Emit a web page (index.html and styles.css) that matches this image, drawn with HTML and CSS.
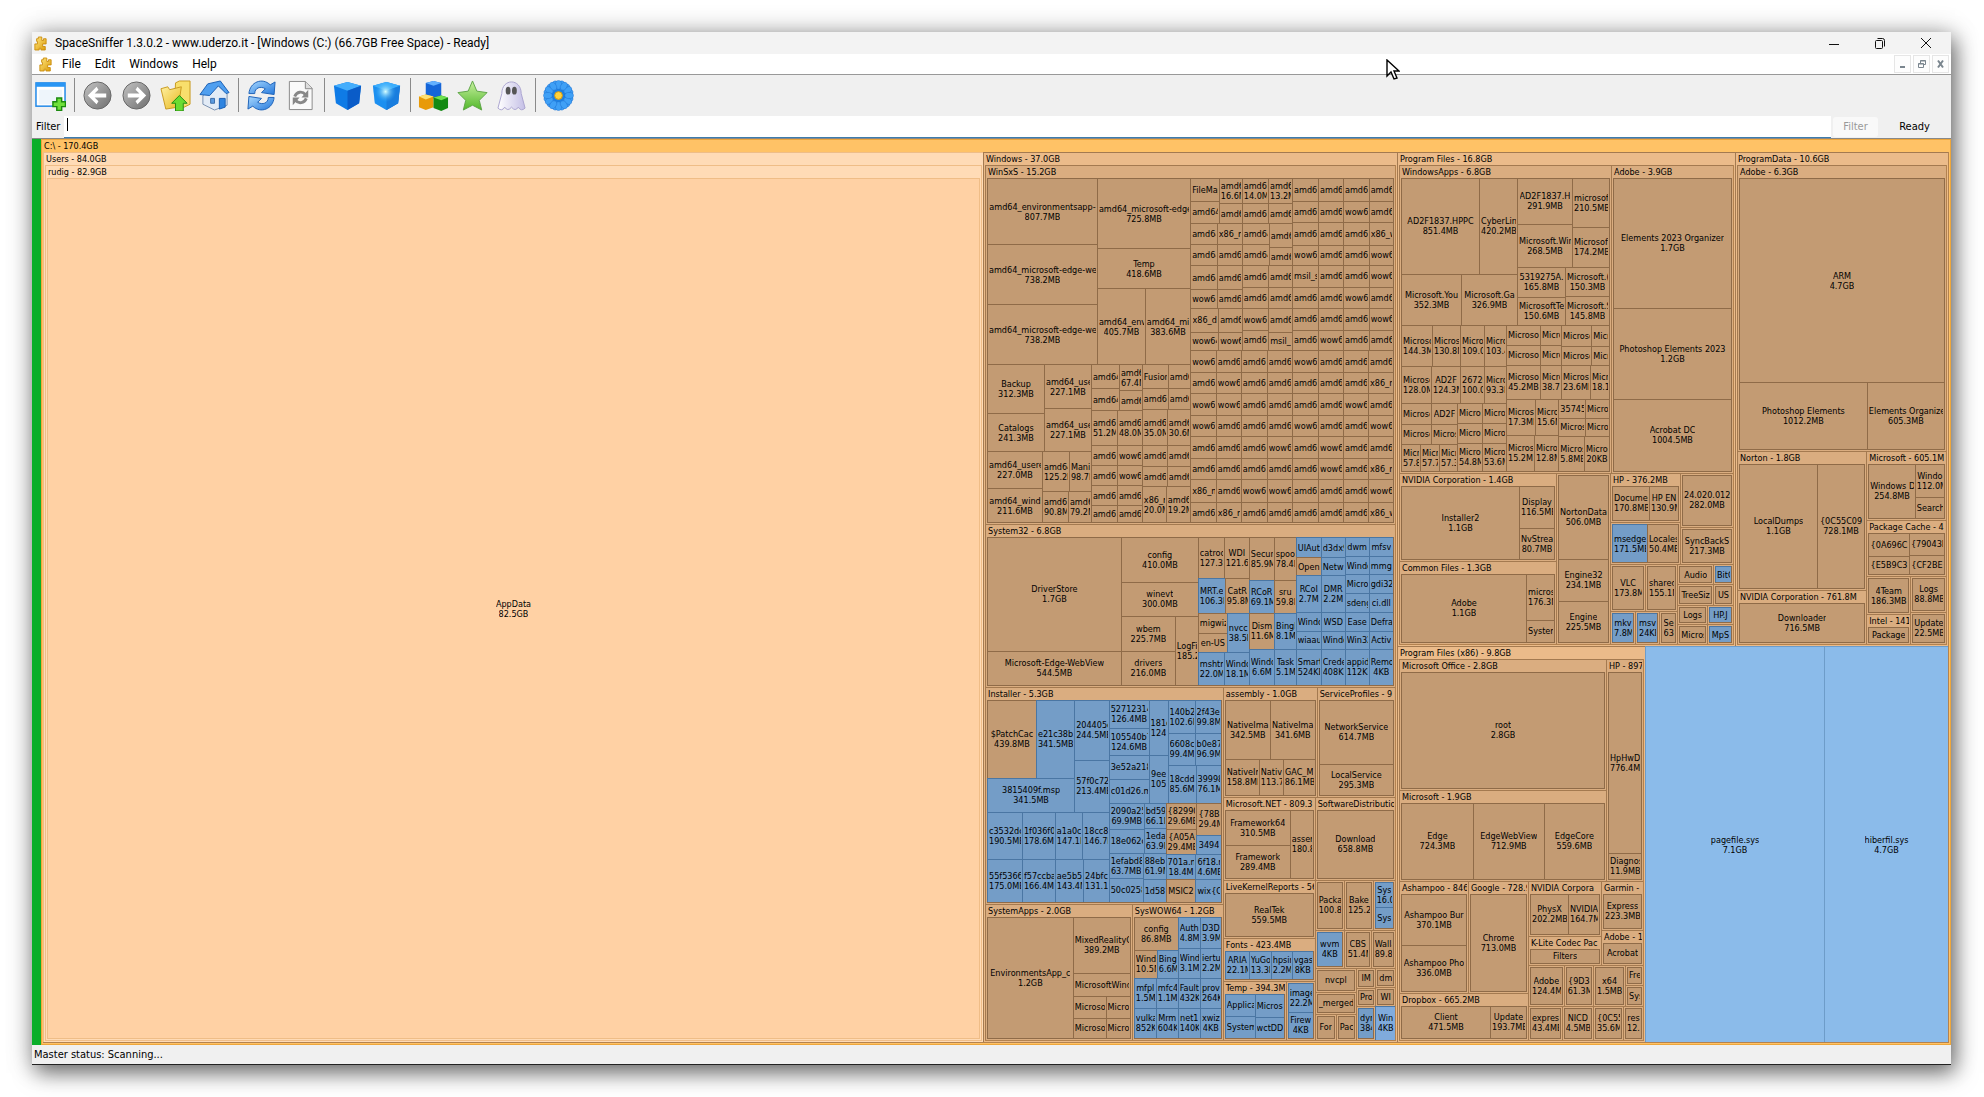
FILE: index.html
```html
<!DOCTYPE html>
<html lang="en">
<head>
<meta charset="utf-8">
<title>SpaceSniffer</title>
<link rel="stylesheet" href="styles.css">
</head>
<body>
<svg class="defs" aria-hidden="true">
  <defs>
    <linearGradient id="gYellow" x1="0" y1="0" x2="1" y2="1"><stop offset="0" stop-color="#fff0a0"/><stop offset="1" stop-color="#e8b820"/></linearGradient>
    <linearGradient id="gPuzzle" x1="0" y1="0" x2="1" y2="1"><stop offset="0" stop-color="#ffe680"/><stop offset="1" stop-color="#dc9c08"/></linearGradient>
    <linearGradient id="gGrey" x1="0" y1="0" x2="1" y2="1"><stop offset="0" stop-color="#c4c4c4"/><stop offset="1" stop-color="#6e6e6e"/></linearGradient>
    <linearGradient id="gGreen" x1="0" y1="0" x2="0" y2="1"><stop offset="0" stop-color="#c8f0a0"/><stop offset="1" stop-color="#52b82a"/></linearGradient>
    <linearGradient id="gBlue" x1="0" y1="0" x2="1" y2="1"><stop offset="0" stop-color="#a8d8ff"/><stop offset="1" stop-color="#2478dc"/></linearGradient>
    <linearGradient id="gGhost" x1="0" y1="0" x2="1" y2="0"><stop offset="0" stop-color="#fff"/><stop offset="1" stop-color="#c4bfe6"/></linearGradient>
    <radialGradient id="gGlow"><stop offset="0" stop-color="#d8ffff"/><stop offset="1" stop-color="#2aa4f4" stop-opacity="0"/></radialGradient>
    <g id="puzzle"><path d="M5 1h4v4h2V3h3v6h-4v3h3v4H8v-2H6v2H1V9h3V6H3V3h2z" fill="url(#gPuzzle)" stroke="#c88a08"/></g>
    <g id="cube"><path d="M2 6 16 2l14 4-2 18-12 7L4 24z" fill="#0f7be6"/><path d="M2 6 16 2l14 4-14 5z" fill="#45aefc"/><path d="M16 11 30 6l-2 18-12 7z" fill="#0a5cc8"/></g>
    <g id="swirl"><path d="M3 14C4 2 17-3 25 5l5-3-1 13-13-2 4-4C15 6 9 8 9 14z" fill="url(#gBlue)" stroke="#1e62b8"/><path d="M29 18c-1 12-14 17-22 9l-5 3 1-13 13 2-4 4c5 3 11 1 11-5z" fill="url(#gBlue)" stroke="#1e62b8"/></g>
    <g id="petals"><ellipse id="petal" cx="16" cy="5" rx="3.200" ry="4.500" fill="#3fa0f6" stroke="#1668cc" stroke-width=".4"/><use href="#petal" transform="rotate(60 16 16)"/><use href="#petal" transform="rotate(120 16 16)"/><use href="#petal" transform="rotate(180 16 16)"/><use href="#petal" transform="rotate(240 16 16)"/><use href="#petal" transform="rotate(300 16 16)"/></g>
  </defs>
</svg>
<main class="window">
  <header class="titlebar">
    <svg class="app-icon" viewBox="0 0 15 17"><use href="#puzzle"/></svg>
    <h1>SpaceSniffer 1.3.0.2 - www.uderzo.it - [Windows (C:) (66.7GB Free Space) - Ready]</h1>
    <button class="win-btn" aria-label="Minimize"><svg viewBox="0 0 12 12"><path d="M1 7.500h10"/></svg></button>
    <button class="win-btn" aria-label="Restore"><svg viewBox="0 0 12 12"><rect x="1.500" y="3.500" width="7" height="8" rx="1"/><path d="M3.500 1.500h5q2 0 2 2v6"/></svg></button>
    <button class="win-btn" aria-label="Close"><svg viewBox="0 0 12 12"><path d="M1 1l10 10M11 1 1 11"/></svg></button>
  </header>
  <nav class="menubar">
    <svg class="app-icon" viewBox="0 0 15 17"><use href="#puzzle"/></svg>
    <button>File</button><button>Edit</button><button>Windows</button><button>Help</button>
    <span class="mdi">
      <button aria-label="Minimize view"><svg viewBox="0 0 10 10"><path d="M2 8h5" stroke-width="2"/></svg></button>
      <button aria-label="Restore view"><svg viewBox="0 0 10 10"><path d="M1.500 4.500h5v4h-5zM3.500 4V1.500h5v4H7M1.500 5h5M3.500 2h5"/></svg></button>
      <button aria-label="Close view"><svg viewBox="0 0 10 10"><path d="M2 1.500l5 7M7 1.500l-5 7" stroke-width="2"/></svg></button>
    </span>
  </nav>
  <div class="toolbar" role="toolbar">
    <button aria-label="New view"><svg viewBox="0 0 32 32"><rect x="1" y="3" width="30" height="24" fill="#fff" stroke="#1c86e8" stroke-width="1.500"/><path d="M1 3h30v4H1z" fill="#2a96f4"/><path d="M4 10h24v15H4z" fill="#eef5fb"/><path d="M22.500 18.500h5v4h4v5h-4v4h-5v-4h-4v-5h4z" fill="#6fe03a" stroke="#1c8a10" stroke-width="1.500"/></svg></button>
    <i class="sep"></i>
    <button aria-label="Back"><svg viewBox="0 0 32 32"><circle cx="16" cy="16" r="14" fill="url(#gGrey)" stroke="#666"/><path d="M6 16l9-9 2 3-4 4h12v4H13l4 4-2 3z" fill="#fff"/></svg></button>
    <button aria-label="Forward"><svg viewBox="0 0 32 32"><circle cx="16" cy="16" r="14" fill="url(#gGrey)" stroke="#666"/><path d="M26 16l-9-9-2 3 4 4H7v4h12l-4 4 2 3z" fill="#fff"/></svg></button>
    <button aria-label="Up"><svg viewBox="0 0 32 32"><path d="M16 3l4-2 11 0v24l-6 3H15z" fill="#f8df6c" stroke="#c89a20"/><path d="M1 9l7-2 2 3 12-3-3 21-13 2z" fill="url(#gYellow)" stroke="#c89a20"/><path d="M20 16l8 8h-4v8h-8v-8h-4z" fill="#6bdc30" stroke="#218a12"/></svg></button>
    <button aria-label="Home"><svg viewBox="0 0 32 32"><path d="M4 16v9l12 6 13-5V14L20 6z" fill="#e2ebf6" stroke="#7890b0"/><path d="M1 15 9 4l13-3 9 12-3 1-8-8-9 10z" fill="#4f9ff0" stroke="#1a5fb4"/><path d="M21 19h6v9l-6 2z" fill="#2f84e0" stroke="#1a5fb4"/><path d="M12 19h4v5h-4z" fill="#5c9be0" stroke="#3c6ca8"/></svg></button>
    <i class="sep"></i>
    <button aria-label="Refresh"><svg viewBox="0 0 32 32"><use href="#swirl"/></svg></button>
    <button aria-label="Rescan file"><svg viewBox="0 0 32 32"><path d="M4.500 1.500H21l7 7v22H4.500z" fill="#fafafa" stroke="#888"/><path d="M21 1.500V9h7" fill="#ddd" stroke="#888"/><g fill="none" stroke="#888" stroke-width="3"><path d="M10 17c2-5 8-6 11-2M22 19c-2 5-8 6-11 2"/></g><path d="M24 10v8h-7zM8 26v-8h7z" fill="#888"/></svg></button>
    <i class="sep"></i>
    <button aria-label="Less detail"><svg viewBox="0 0 32 32"><use href="#cube"/></svg></button>
    <button aria-label="More detail"><svg viewBox="0 0 32 32"><use href="#cube"/><path d="M2 6 16 2l14 4-2 18-12 7L4 24z" fill="#2fb0ff" opacity=".4"/><circle cx="15" cy="12" r="11" fill="url(#gGlow)"/></svg></button>
    <i class="sep"></i>
    <button aria-label="Show files"><svg viewBox="0 0 32 32"><path d="M8 3l8-2 8 2v13l-8 3-8-3z" fill="#1565d8"/><path d="M8 3l8-2 8 2-8 3z" fill="#63b0ff"/><path d="M1 17l7-2 8 2v11l-8 3-7-3z" fill="#e89a08"/><path d="M1 17l7-2 8 2-8 3z" fill="#ffe070"/><path d="M16 18l8-2 7 2v11l-7 3-8-3z" fill="#138a13"/><path d="M16 18l8-2 7 2-7 3z" fill="#6fe050"/></svg></button>
    <button aria-label="Tag"><svg viewBox="0 0 32 32"><path d="M16 1l4.500 10.500L31 13l-8 8 2.500 10L16 26l-9.500 5L9 21l-8-8 10.500-1.500z" fill="url(#gGreen)" stroke="#5fa548"/></svg></button>
    <button aria-label="Free space"><svg viewBox="0 0 32 32"><path d="M6 14C6-2 26-2 26 14l4 15q-4 4-7-1-3 5-7 0-4 5-7 0-3 5-7 1z" fill="url(#gGhost)" stroke="#aaa4cf"/><ellipse cx="12.500" cy="11" rx="2.500" ry="4" fill="#555"/><ellipse cx="19" cy="11" rx="2.500" ry="4" fill="#555"/></svg></button>
    <i class="sep"></i>
    <button aria-label="Configure"><svg viewBox="0 0 32 32"><circle cx="16" cy="16" r="10" fill="#1d80e2"/><use href="#petals" transform="rotate(15 16 16)"/><use href="#petals" transform="rotate(45 16 16)"/><use href="#petals"/><use href="#petals" transform="rotate(30 16 16)"/><circle cx="16" cy="16" r="4" fill="#ffd23c" stroke="#d89a10"/></svg></button>
  </div>
  <form class="filterbar">
    <label for="filter">Filter</label>
    <span class="field"><input id="filter" type="text"><i class="caret"></i></span>
    <button type="button" disabled>Filter</button>
    <output>Ready</output>
  </form>
  <section class="view">
    <div class="freebar"></div>
    <div id="map"></div>
  </section>
  <footer class="status">Master status: Scanning...</footer>
</main>
<svg class="pointer" viewBox="0 0 14 22"><path d="M1 1v16l4-4 3 7 3-1-3-7h5z" fill="#fff" stroke="#000" stroke-width="1.400"/></svg>
<script src="map.js"></script>
</body>
</html>
```
FILE: styles.css
```css
* { box-sizing: border-box; }
body {
  margin: 0;
  height: 100vh;
  padding: 32px 33px 32px 32px;
  background: #fff;
  color: #000;
  font: 11px/13px "DejaVu Sans Condensed", "Noto Sans", sans-serif;
  position: relative;
}
button, input { font: inherit; color: inherit; border: 0; padding: 0; background: none; }
.defs { position: absolute; width: 0; height: 0; }
.window {
  height: 100%;
  display: flex;
  flex-direction: column;
  background: #f0f0f0;
  border-bottom: 1px solid #222;
  box-shadow: 0 0 24px rgba(0,0,0,.25), 4px 8px 20px rgba(0,0,0,.5);
}
.titlebar {
  height: 22px;
  display: flex;
  align-items: center;
  background: #f3f3f3;
  padding: 0 2px;
  font-family: Roboto, "Open Sans", sans-serif;
}
.titlebar h1 { flex: 1; margin: 0 0 0 8px; font-size: 12px; font-weight: 400; }
.app-icon { width: 13px; height: 15px; }
.win-btn { width: 46px; height: 22px; display: flex; align-items: center; justify-content: center; }
.win-btn svg { width: 12px; height: 12px; fill: none; stroke: #111; }
.menubar {
  height: 21px;
  display: flex;
  align-items: center;
  padding-left: 7px;
  background: #fff;
  border-bottom: 1px solid #999;
  font: 12px/16px Roboto, "Open Sans", sans-serif;
}
.menubar > button { padding: 0 7px; }
.menubar > .app-icon { margin-right: 3px; }
.mdi { margin-left: auto; display: flex; gap: 2px; padding-right: 2px; }
.mdi button { width: 17px; height: 18px; border: 1px solid #e6e6e6; background: #fdfdfd; display: flex; align-items: center; justify-content: center; }
.mdi svg { width: 10px; height: 10px; fill: none; stroke: #7a858e; }
.toolbar { height: 40px; display: flex; align-items: center; }
.toolbar button { width: 39px; height: 38px; display: flex; align-items: center; }
.toolbar button { padding-left: 3px; }
.toolbar svg { width: 31px; height: 31px; }
.sep { width: 8px; height: 34px; background: linear-gradient(#8a8a8a, #8a8a8a) 3px 0 / 1px 100% no-repeat; }
.filterbar { height: 23px; display: flex; align-items: center; padding-left: 4px; }
.field { flex: 1; display: flex; height: 22px; margin-left: 4px; position: relative; }
.field input { flex: 1; min-width: 0; background: #fff; border-bottom: 1px solid #3d7dad; outline: 0; }
.caret { position: absolute; left: 3px; top: 2px; width: 1px; height: 13px; background: #000; }
.filterbar button { width: 45px; height: 20px; margin-left: 2px; background: #f9f9f9; border-radius: 3px; color: #999; }
.filterbar output { width: 73px; text-align: center; }
.view { flex: 1; min-height: 0; display: flex; border-top: 1px solid #888; }
.freebar { width: 9px; background: #0aae2a; }
#map { flex: 1; min-width: 0; display: grid; font: 9px/10px "DejaVu Sans Condensed", "Noto Sans", sans-serif; border: solid #eea63a; border-width: 0 1px 1px 0; }
.status { height: 19px; padding: 3px 2px; }

.split { display: grid; min-width: 0; min-height: 0; }
.folder {
  display: flex;
  flex-direction: column;
  min-width: 0;
  min-height: 0;
  padding: 1px;
  border: solid #a47a50;
  border-width: 1px 0 0 1px;
  background: #daad80;
}
.folder > .title { height: 12px; margin-top: -1px; padding: 1px 0 0 1px; line-height: 11px; overflow: hidden; white-space: nowrap; }
.folder > .body { flex: 1; min-height: 0; display: grid; border: solid #8f6b48; border-width: 0 1px 1px 0; }
.folder.root { background: #ffc266; border-color: #eea63a; }
.folder.top { background: #ebbb8a; border-color: #a47a50; }
.folder.top > .body, .folder.root > .body { border-color: #b3824f; }
.leaf {
  min-width: 0;
  min-height: 0;
  overflow: hidden;
  display: flex;
  flex-direction: column;
  align-items: center;
  justify-content: center;
  padding: 0 1px;
  border: solid #8f6b48;
  border-width: 1px 0 0 1px;
  background: #c39b73;
}
.leaf span { max-width: 100%; overflow-x: clip; white-space: nowrap; flex: none; }
.leaf.file { background: #749dc7; border-color: #4a76a3; }
.leaf.file.mid { background: #80abdc; }
.leaf.file.big { background: #8bbbea; border-color: #6d9cc9; }
.pale .folder.top, .folder.pale { background: #ffdbb6; border-color: #efbd87; }
.folder.pale > .body { border-color: #efbd87; }
.folder.pale .leaf { background: #ffd1a4; border-color: #efbd87; }
.pointer { position: absolute; left: 1386px; top: 59px; width: 14px; height: 22px; }
```
FILE: map.js
```js
// Treemap model. R = row of [width, node] pairs, C = column of [height, node] pairs,
// T = table of leaves, F = folder. Leaves are "name|size"; a leading * marks a file.
const R = (...a) => ({ dir: 'Columns', a });
const C = (...a) => ({ dir: 'Rows', a });
const F = (title, kid, cls) => ({ title, kid, cls: cls || '' });
const NAMES = { a: 'amd64', w: 'wow64', x: 'x86_m', M: 'Microsoft' };
const T = (cols, rows, text) => {
  const cells = text.split(',');
  return C(...rows.flatMap((h, r) => [h, R(...cols.flatMap((w, c) => [w, cells[r * cols.length + c]]))]));
};

const winsxs = F('WinSxS - 15.2GB', R(
  610, C(
    558, R(
      330, C(198, 'amd64_environmentsapp-|807.7MB', 180, 'amd64_microsoft-edge-we|738.2MB', 180, 'amd64_microsoft-edge-we|738.2MB'),
      280, C(210, 'amd64_microsoft-edge|725.8MB', 120, 'Temp|418.6MB', 228, R(144, 'amd64_env|405.7MB', 136, 'amd64_mi|383.6MB'))),
    474, R(
      312, C(
        261, R(171, C(147, 'Backup|312.3MB', 114, 'Catalogs|241.3MB'), 141, C(132, 'amd64_use|227.1MB', 129, 'amd64_use|227.1MB')),
        213, R(165, C(111, 'amd64_usere|227.0MB', 102, 'amd64_wind|211.6MB'),
               147, C(120, T([81, 66], [1], 'a|125.2M,Mani|98.7M'), 93, T([78, 69], [1], 'a|90.8M,a|79.2M')))),
      153, C(138, R(84, C(72, 'a', 66, 'a'), 69, C(78, 'a|67.4M', 60, 'a')),
             336, T([78, 75], [105, 60, 60, 58, 53], 'a|51.2M,a|48.0M,a,w,a,w,a,a,a,a')),
      145, C(135, T([78, 67], [72, 63], 'Fusion,a,a,a'),
             231, T([75, 70], [107, 64, 60], 'a|35.0M,a|30.6M,a,a,a,a'),
             108, T([72, 73], [1], 'x86_m|20.0M,a|19.2M')))),
  609, C(
    515, R(
      306, C(
        135, R(86, C(68, 'FileMaps', 67, 'a'), 69, C(75, 'a|16.6M', 60, 'a'), 79, C(75, 'a|14.0M', 60, 'a'), 72, C(75, 'a|13.2M', 60, 'a')),
        127, R(80, C(64, 'a', 63, 'a'), 75, C(64, 'x86_m', 63, 'a'), 81, C(64, 'a', 63, 'a'), 70, C(72, 'a', 55, 'a')),
        128, R(80, C(70, 'a', 58, 'w'), 75, C(70, 'a', 58, 'a'), 79, C(64, 'a', 64, 'a'), 72, C(64, 'a', 64, 'a')),
        125, R(84, C(70, 'x86_d', 55, 'w'), 71, C(70, 'a', 55, 'w'), 79, C(65, 'w', 60, 'a'), 72, C(70, 'a', 55, 'msil_'))),
      303, T([78, 75, 77, 73], [70, 61, 69, 60, 66, 63, 66, 60], 'a,a,a,a,a,a,w,a,a,a,a,x86_w,w,a,a,w,msil_s,a,a,w,a,a,w,a,a,a,a,w,a,w,a,a')),
    517, T([77, 75, 78, 76, 78, 75, 75, 75], [67, 63, 66, 63, 66, 63, 67, 62],
      'w,a,a,a,w,a,a,a,a,w,a,a,a,a,a,x,w,w,a,a,a,a,w,a,w,a,a,a,w,a,a,w,a,a,a,w,a,w,a,a,a,a,a,a,a,w,a,x,x,a,w,w,a,a,a,w,a,x,a,a,a,a,a,x86_w'))));

const system32 = F('System32 - 6.8GB', R(
  402, C(339, 'DriverStore|1.7GB', 102, 'Microsoft-Edge-WebView|544.5MB'),
  231, C(135, 'config|410.0MB', 99, 'winevt|300.0MB', 207, R(162, C(105, 'wbem|225.7MB', 102, 'drivers|216.0MB'), 69, 'LogFiles|185.2M')),
  153, C(123, T([78, 75], [1], 'catroot|127.3M,WDI|121.6M'), 102, T([81, 72], [1], '*MRT.e|106.3M,CatR|95.8M'),
         117, R(87, C(60, 'migwiz', 57, 'en-US'), 66, '*nvcc|38.5M'), 99, T([78, 75], [1], '*mshtm|22.0M,*Windo|18.1M')),
  141, C(129, T([75, 66], [1], 'Secur|85.9M,spoo|78.4M'), 96, T([75, 66], [1], '*RCoR|69.1M,sru|59.8M'),
         108, T([76, 65], [1], 'Dism|11.6M,*BingM|8.1M'), 108, T([76, 65], [1], '*Windo|6.6M,*Task|5.1M')),
  147, T([75, 72], [60, 54, 108, 57, 54, 108], '*UIAut,*d3dx9,Open,*Netw,*RCoI|2.7M,*DMR|2.2M,*Windo,*WSD,*wiaau,*Windo,*Smart|524KB,*Crede|408KB'),
  145, T([72, 73], [57, 54, 57, 54, 57, 54, 108], '*dwm,*mfsv,*Windo,*mmg,*Micro,*gdi32,*sdeng,*ci.dll,*Ease,*Defra,*Win32,*Activ,*appid|112KB,*Remo|4KB')));

const installer = F('Installer - 5.3GB', R(
  366, C(
    336, R(262, C(234, R(147, '$PatchCac|439.8MB', 115, '*e21c38b|341.5MB'), 102, '*3815409f.msp|341.5MB'),
           104, C(180, '*204405c|244.5MB', 156, '*57f0c72|213.4MB')),
    141, T([105, 99, 82, 80], [1], '*c3532dc|190.5MB,*1f036f0|178.6MB,*a1a0c|147.1M,*18cc87|146.7M'),
    130, T([105, 99, 85, 77], [1], '*55f5366|175.0MB,*f57ccba|166.4MB,*ae5b5|143.4M,*24bfc|131.1M')),
  337, C(
    309, R(120, C(84, '*52712314|126.4MB', 81, '*105540b7|124.6MB', 72, '*3e52a218', 72, '*c01d26.m'),
           57, C(165, '*181c|124', 144, '*9ee|105'),
           160, C(99, T([81, 79], [1], '*140b2|102.6M,*2f43e|99.8M'), 96, T([81, 79], [1], '*6608c|99.4M,*b0e87|96.9M'), 114, T([84, 76], [1], '*18cdd|85.6M,*39998|76.1M'))),
    298, R(171, C(150, R(105, C(78, '*2090a25|69.9MB', 72, '*18e062c'), 66, C(75, '*bd59|66.1M', 75, '*1eda|63.9M')),
                  148, R(102, C(75, '*1efabd8|63.7MB', 73, '*50c0258'), 69, C(79, '*88eb|61.9M', 69, '*1d58'))),
           166, C(153, R(93, C(78, '{82990|29.6MB', 75, '{A05A|29.4MB'), 73, C(96, '{78B|29.4M', 57, '*3494')),
                  145, T([90, 76], [75, 70], '*701a.m|18.4M,*6f18.m|4.6MB,MSIC2,*wix{C'))))));

const winLow = R(
  714, C(
    652, installer,
    408, R(
      441, F('SystemApps - 2.0GB', R(258, 'EnvironmentsApp_c|1.2GB', 172, C(168, 'MixedRealityC|389.2MB', 69, 'MicrosoftWind', 127, T([99, 73], [66, 61], 'M,M,M,M')))),
      273, F('SysWOW64 - 1.2GB', R(
        132, C(99, 'config|86.8MB', 84, T([69, 63], [1], 'Windo|10.5M,*Bing|6.6M'), 181, T([66, 66], [90, 91], '*mfpl|1.5MB,*mfc4|1.1MB,*vulka|852KB,*Mrm|604KB')),
        130, T([67, 63], [93, 90, 90, 91], '*Auth|4.8MB,*D3D|3.9M,*Wind|3.1MB,*iertu|2.2M,*Fault|432KB,*prov|264K,*net1|140KB,*xwiz|4KB'))))),
  517, C(
    330, R(282, F('assembly - 1.0GB', C(177, T([135, 135], [1], 'NativeIma|342.5MB,NativeIma|341.6MB'), 108, T([102, 72, 96], [1], 'NativeIm|158.8MB,Nativ|113.7M,GAC_M|86.1MB'))),
           235, F('ServiceProfiles - 9', C(192, 'NetworkService|614.7MB', 93, 'LocalService|295.3MB'))),
    249, R(276, F('Microsoft.NET - 809.3', R(195, C(105, 'Framework64|310.5MB', 99, 'Framework|289.4MB'), 69, 'assem|180.8M')),
           241, F('SoftwareDistributio', 'Download|658.8MB')),
    481, R(
      276, C(174, F('LiveKernelReports - 56', 'RealTek|559.5MB'),
             129, F('Fonts - 423.4MB', T([72, 66, 63, 63], [1], '*ARIA|22.1M,*YuGo|13.3M,*hpsim|2.2MB,*vgas|8KB')),
             178, R(189, F('Temp - 394.3M', R(90, C(66, '*Applica', 67, '*System'), 88, C(69, '*Micros', 64, '*wctDD'))), 87, F('', C(87, '*image|22.2M', 79, '*Firew|4KB')))),
      241, C(
        150, R(88, F('', 'Packa|100.8M'), 86, F('', 'Bake|125.2M'), 67, F('', C(77, '*Sys|16.0M', 62, '*Sys'))),
        114, R(87, F('', '*wvm|4KB'), 81, F('', 'CBS|51.4M'), 73, F('', 'Walla|89.8M')),
        217, R(124, C(72, F('', 'nvcpl'), 66, F('', '_merged'), 79, R(63, F('', 'For'), 61, F('', 'Pac'))),
               58, C(60, F('', 'IM'), 54, F('', 'Pro'), 103, F('', '*dyn|384')),
               59, C(58, F('', 'dm'), 56, F('', 'WI'), 103, '#Win|4KB'))))));

const windows = F('Windows - 37.0GB', C(1078, winsxs, 486, system32, 1060, winLow), 'top');

const windowsApps = F('WindowsApps - 6.8GB', C(
  441, R(
    348, C(288, T([234, 114], [1], 'AD2F1837.HPPC|851.4MB,CyberLin|420.2MB'), 153, T([180, 168], [1], 'Microsoft.You|352.3MB,Microsoft.Ga|326.9MB')),
    276, C(267, R(165, C(138, 'AD2F1837.H|291.9MB', 129, 'Microsoft.Win|268.5MB'), 111, C(147, 'microsoft|210.5MB', 120, 'Microsoft|174.2MB')),
           174, R(144, C(90, '5319275A.|165.8MB', 84, 'MicrosoftTe|150.6MB'), 132, C(87, 'Microsoft.(|150.3MB', 87, 'Microsoft.S|145.8MB')))),
  439, R(
    315, C(
      123, T([93, 84, 72, 66], [1], 'M|144.3MB,M|130.8M,M|109.0M,M|103.4M'),
      111, T([90, 87, 72, 66], [1], 'M|128.0MB,AD2F|124.3M,26720|100.0M,M|93.3M'),
      205, R(168, C(63, T([90, 78], [1], 'M,AD2F'), 60, T([90, 78], [1], 'M,M'), 82, T([57, 57, 54], [1], 'M|57.8M,M|57.7M,M|57.3M')),
             147, T([75, 72], [60, 60, 85], 'M,M,M,M,M|54.8M,M|53.6M'))),
    309, C(
      222, R(165, T([102, 63], [60, 60, 102], 'M,M,M,M,M|45.2MB,M|38.7M'),
             144, C(120, T([91, 53], [64, 56], 'M,M,M,M'), 102, T([87, 57], [1], 'M|23.6MB,M|18.1M'))),
      217, R(157, C(108, T([87, 70], [1], 'M|17.3MB,M|15.6M'), 109, T([84, 73], [1], 'M|15.2MB,M|12.8M')),
             152, C(111, T([80, 72], [57, 54], '35745,M,M,M'), 106, T([77, 75], [1], 'M|5.8MB,M|20KB')))))));

const pfLow = R(
  471, C(264, F('NVIDIA Corporation - 1.4GB', R(354, 'Installer2|1.1GB', 105, C(126, 'Display|116.5MB', 93, 'NvStrea|80.7MB'))),
         250, F('Common Files - 1.3GB', R(375, 'Adobe|1.1GB', 84, C(139, 'micros|176.3M', 67, 'System')))),
  162, F('', C(252, 'NortonData|506.0MB', 126, 'Engine32|234.1MB', 124, 'Engine|225.5MB')),
  369, C(
    275, R(210, C(147, F('HP - 376.2MB', T([111, 87], [1], 'Documen|170.8MB,HP EN|130.9M')), 128, F('', T([105, 93], [1], '*msedge|171.5MB,Locales|50.4MB'))),
           159, C(162, F('', '24.020.012|282.0MB'), 113, F('', 'SyncBackS|217.3MB'))),
    239, R(202, C(139, R(105, F('', 'VLC|173.8M'), 97, F('', 'shared|155.1M')), 100, R(75, F('', '*mkv|7.8M'), 72, F('', '*msv|24KB'), 55, F('', 'Se|63'))),
           167, C(60, R(107, F('', 'Audio'), 60, F('', '*BitC')), 61, R(107, F('', 'TreeSiz'), 60, F('', 'US')),
                  59, R(89, F('', 'Logs'), 78, F('', '*HP.J')), 59, R(89, F('', 'Micros'), 78, F('', '*MpS'))))));

const programFiles = F('Program Files - 16.8GB', C(
  925, R(636, windowsApps, 366, F('Adobe - 3.9GB', C(390, 'Elements 2023 Organizer|1.7GB', 273, 'Photoshop Elements 2023|1.2GB', 217, 'Acrobat DC|1004.5MB'))),
  514, pfLow), 'top');

const programData = F('ProgramData - 10.6GB', C(
  859, F('Adobe - 6.3GB', C(615, 'ARM|4.7GB', 200, T([384, 232], [1], 'Photoshop Elements|1012.2MB,Elements Organize|605.3MB'))),
  580, R(387, C(417, F('Norton - 1.8GB', T([234, 142], [1], 'LocalDumps|1.1GB,{0C55C09|728.1MB')), 163, F('NVIDIA Corporation - 761.8M', 'Downloader|716.5MB')),
         239, C(207, F('Microsoft - 605.1M', R(141, 'Windows D|254.8MB', 88, C(99, 'Windo|112.0M', 63, 'Search'))),
                168, F('Package Cache - 4', R(123, C(69, '{0A696C', 54, '{E5B9C3'), 106, C(66, '{79043E', 57, '{CF2BE'))),
                205, R(132, C(116, F('', '4Team|186.3MB'), 89, F('Intel - 141', 'Package')), 107, C(108, F('', 'Logs|88.8MB'), 97, F('', 'Update|22.5MB')))))), 'top');

const programFiles86 = F('Program Files (x86) - 9.8GB', C(
  664, R(621, C(392, F('Microsoft Office - 2.8GB', 'root|2.8GB'), 272, F('Microsoft - 1.9GB', T([216, 213, 181], [1], 'Edge|724.3MB,EdgeWebView|712.9MB,EdgeCore|559.6MB'))),
         111, F('HP - 897', C(543, 'HpHwD|776.4MB', 76, 'Diagnos|11.9MB'))),
  478, R(
    387, C(336, R(207, F('Ashampoo - 846', C(153, 'Ashampoo Bur|370.1MB', 138, 'Ashampoo Pho|336.0MB')), 180, F('Google - 728.9', 'Chrome|713.0MB')),
           142, F('Dropbox - 665.2MB', T([267, 108], [1], 'Client|471.5MB,Update|193.7MB'))),
    345, C(
      252, R(219, C(165, F('NVIDIA Corpora', T([114, 93], [1], 'PhysX|202.2MB,NVIDIA|164.7M')), 87, F('K-Lite Codec Pac', 'Filters')),
             126, C(147, F('Garmin -', 'Express|223.3MB'), 105, F('Adobe - 1', 'Acrobat'))),
      124, R(107, F('', 'Adobe|124.4M'), 88, F('', '{9D3|61.3M'), 96, F('', 'x64|1.5MB'), 54, C(60, F('', 'Fre'), 64, F('', 'Sys'))),
      102, R(101, F('', 'express|43.4MB'), 94, F('', 'NICD|4.5MB'), 90, F('', '{0C55|35.6M'), 60, F('', 'res|12.'))))), 'top');

const disk = F('C:\\ - 170.4GB', R(
  940, F('Users - 84.0GB', F('rudig - 82.9GB', 'AppData|82.5GB'), 'pale top'),
  414, windows,
  551, C(494, R(338, programFiles, 213, programData), 396, R(248, programFiles86, 179, '@pagefile.sys|7.1GB', 124, '@hiberfil.sys|4.7GB'))), 'root');

const FILE_CLASS = { '*': 'file', '#': 'file mid', '@': 'file big' };

function el(tag, cls, text) {
  const n = document.createElement(tag);
  if (cls) n.className = cls;
  if (text) n.textContent = text;
  return n;
}

function build(node, pale) {
  if (typeof node === 'string') {
    const kind = FILE_CLASS[node[0]];
    const leaf = el('div', kind ? 'leaf ' + kind : 'leaf');
    (kind ? node.slice(1) : node).split('|').forEach(t => leaf.append(el('span', '', NAMES[t] || t)));
    return leaf;
  }
  if (node.dir) {
    const box = el('div', 'split');
    box.style['gridTemplate' + node.dir] = node.a.filter((_, i) => i % 2 === 0).map(w => `minmax(0,${w}fr)`).join(' ');
    box.style['gridTemplate' + (node.dir === 'Rows' ? 'Columns' : 'Rows')] = 'minmax(0,1fr)';
    node.a.forEach((k, i) => { if (i % 2) box.append(build(k, pale)); });
    return box;
  }
  const isPale = pale || node.cls.startsWith('pale');
  const f = el('div', 'folder ' + (isPale ? 'pale ' : '') + node.cls);
  if (node.title) f.append(el('div', 'title', node.title));
  const body = el('div', 'body');
  body.append(build(node.kid, isPale));
  f.append(body);
  return f;
}
document.getElementById('map').append(build(disk));
```
